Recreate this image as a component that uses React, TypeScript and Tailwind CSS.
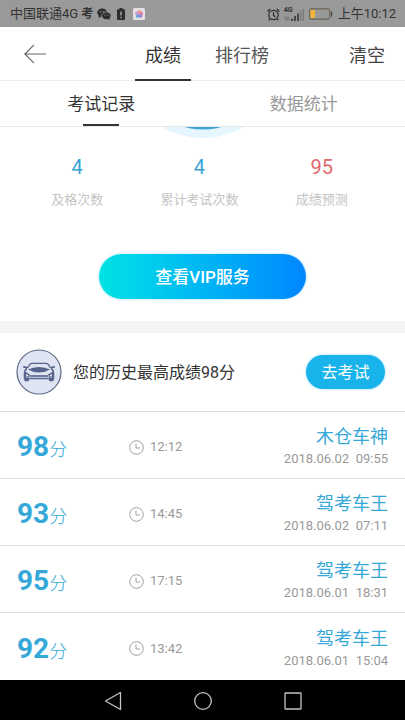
import { useState } from "react";

const STATS = [
  { label: "及格次数", value: "4", color: "text-[#35a3d3]" },
  { label: "累计考试次数", value: "4", color: "text-[#35a3d3]" },
  { label: "成绩预测", value: "95", color: "text-[#e06a6c]" },
];

const RECORDS = [
  { score: 98, duration: "12:12", title: "木仓车神", date: "2018.06.02", time: "09:55" },
  { score: 93, duration: "14:45", title: "驾考车王", date: "2018.06.02", time: "07:11" },
  { score: 95, duration: "17:15", title: "驾考车王", date: "2018.06.01", time: "18:31" },
  { score: 92, duration: "13:42", title: "驾考车王", date: "2018.06.01", time: "15:04" },
];

function StatusBar() {
  return (
    <div className="flex h-[27px] items-center bg-[#999999] pl-[10px] pr-[9px] pt-px text-[13px] text-[#333333]">
      <span>中国联通4G</span>
      <span className="ml-[3px] text-[12px] font-bold leading-none">考</span>
      {/* WeChat */}
      <svg className="ml-1 h-3 w-[14px]" viewBox="0 0 14 12">
        <ellipse cx="5.2" cy="4.6" rx="5" ry="4.1" fill="#2d2d2d" />
        <path d="M2 7.5 1.4 10 4.4 8.4Z" fill="#2d2d2d" />
        <ellipse cx="9.4" cy="7.8" rx="4.6" ry="3.8" fill="#2d2d2d" stroke="#999999" strokeWidth="0.7" />
        <path d="M10.5 10.8 12.8 12 12.4 10Z" fill="#2d2d2d" />
        <circle cx="3.6" cy="3.7" r="0.7" fill="#999999" />
        <circle cx="6.8" cy="3.7" r="0.7" fill="#999999" />
        <circle cx="7.9" cy="7.1" r="0.6" fill="#999999" />
        <circle cx="10.9" cy="7.1" r="0.6" fill="#999999" />
      </svg>
      {/* Low battery */}
      <svg className="ml-[6px] h-3 w-2" viewBox="0 0 8 12">
        <path d="M2.5 0h3v1.3H7a1 1 0 0 1 1 1V11a1 1 0 0 1-1 1H1a1 1 0 0 1-1-1V2.3a1 1 0 0 1 1-1h1.5Z" fill="#2d2d2d" />
        <path d="M4 3.5v4M4 8.7v1.5" stroke="#bbbbbb" strokeWidth="1.3" />
      </svg>
      {/* Gallery app */}
      <svg className="ml-2 h-3 w-3" viewBox="0 0 12 12">
        <rect width="12" height="12" rx="1.5" fill="#e4e0e4" />
        <circle cx="6.4" cy="3.9" r="1.9" fill="#ee9d78" />
        <circle cx="8.2" cy="5.4" r="1.9" fill="#e688a8" />
        <circle cx="7.5" cy="7.8" r="1.9" fill="#a77fd0" />
        <circle cx="4.8" cy="7.9" r="1.9" fill="#58a4dd" />
        <circle cx="4" cy="5.3" r="1.9" fill="#c997cc" />
        <circle cx="6" cy="6" r="1.2" fill="#c78fd6" />
      </svg>

      {/* Alarm */}
      <svg className="ml-auto h-[13px] w-[13px]" viewBox="0 0 13 13" fill="none" stroke="#2d2d2d" strokeWidth="1.3">
        <circle cx="6.5" cy="7" r="4.7" />
        <path d="M6.5 4.2V7.2L8.3 9M.6 3.4 3.2 1M12.4 3.4 9.8 1M3 10.6 1.7 12.3M10 10.6l1.3 1.7" />
      </svg>
      {/* Signal */}
      <span className="ml-1 flex h-[14px] w-5 items-end">
        <span className="flex h-full w-[7px] flex-col justify-between text-[7px] font-bold leading-[7px]">
          4G
          <svg className="h-[5px] w-[6px]" viewBox="0 0 6 5">
            <path d="M0 1.5h5M1 3.5h5" stroke="#7c7c7c" strokeWidth="1.4" />
          </svg>
        </span>
        <svg className="h-[13px] w-[13px]" viewBox="0 0 13 13">
          <path d="M1 10.5V13M4 8V13M7 5.5V13" stroke="#333333" strokeWidth="1.6" />
          <path d="M9.8 3V13M12.3 1V13" stroke="#777777" strokeWidth="1.3" />
        </svg>
      </span>
      {/* Battery */}
      <svg className="ml-[5px] h-3 w-6" viewBox="0 0 24 12">
        <rect x="0.6" y="0.9" width="20" height="10.2" rx="1.5" fill="none" stroke="#6d6254" strokeWidth="1.1" />
        <rect x="1.5" y="2" width="4.5" height="8" fill="#f3b535" />
        <path d="M22.5 3.5v5" stroke="#444444" strokeWidth="1.4" />
      </svg>
      <span className="ml-[5px]">上午10:12</span>
    </div>
  );
}

function CarBadge() {
  return (
    <svg className="h-[46px] w-[46px] shrink-0" viewBox="0 0 46 46">
      <circle cx="23" cy="23" r="22" fill="#dfe4f2" stroke="#5d6885" strokeWidth="1.2" />
      {/* Roof and mirrors */}
      <path d="M11.5 19 14 15.2Q14.7 14.3 16 14.3H30Q31.300 14.3 32 15.2L34.5 19" fill="none" stroke="#56638a" strokeWidth="1.3" />
      <path d="M7 17 11.500 17.800 11 19.600 7.500 19ZM39 17 34.500 17.800 35 19.600 38.500 19Z" fill="#56638a" />
      {/* Bonnet */}
      <path d="M12 20.500Q17 18 23 18T34 20.500Q29 23.600 23 23.600T12 20.500Z" fill="#56638a" />
      {/* Body sides and bumper */}
      <path d="M11 19.500Q8.500 21 8.500 24V29.500H37.500V24Q37.500 21 35 19.500" fill="none" stroke="#56638a" strokeWidth="1.5" />
      <path d="M9 22.500 14 25.500 12.500 28H9ZM37 22.500 32 25.500 33.500 28H37Z" fill="#56638a" />
      <path d="M10.200 25 12.500 26.300 11.500 27.600H10.200ZM35.800 25 33.500 26.300 34.500 27.600H35.800Z" fill="#eef1f9" />
      <path d="M13.500 27H32.500" stroke="#56638a" strokeWidth="1.6" />
      <path d="M8 28.500H13V31.500Q13 32.200 12.300 32.200H9.200Q8.500 32.200 8.400 31.500ZM33 28.500H38L37.600 31.500Q37.500 32.200 36.800 32.200H33.700Q33 32.200 33 31.500Z" fill="#56638a" />
    </svg>
  );
}

function ClockIcon() {
  return (
    <svg className="h-[15px] w-[15px]" viewBox="0 0 15 15" fill="none" stroke="#a0a0a0">
      <circle cx="7.5" cy="7.5" r="6.8" />
      <path d="M7 3.5V8H11" />
    </svg>
  );
}

export default function App() {
  const [page, setPage] = useState("成绩");
  const [tab, setTab] = useState("考试记录");

  return (
    <div className="flex min-h-screen flex-col bg-white font-['Roboto','Noto_Sans_CJK_SC',sans-serif] text-[#333333]">
      <StatusBar />

      {/* Title bar */}
      <header className="grid h-[54px] grid-cols-[1fr_auto_1fr] items-center border-b border-[#eeeeee] pl-6 pr-5 text-[18px]">
        <button aria-label="返回" className="justify-self-start">
          <svg className="h-5 w-[22px]" viewBox="0 0 22 20" fill="none" stroke="#666666" strokeWidth="1.2">
            <path d="M22 10H.8M10 .8.8 10 10 19.2" />
          </svg>
        </button>
        <nav className="flex h-[54px] gap-[14px] pl-[5px]">
          {["成绩", "排行榜"].map((name) => (
            <button
              key={name}
              onClick={() => setPage(name)}
              className={`border-b-2 px-[10px] pt-1 ${
                page === name ? "border-[#333333]" : "border-transparent text-[#555555]"
              }`}
            >
              {name}
            </button>
          ))}
        </nav>
        <button className="justify-self-end pt-[2px] text-[#444444]">清空</button>
      </header>

      {/* Tabs */}
      <div className="grid h-[46px] grid-cols-2 border-b border-[#e8e8e8] text-[17px]">
        {["考试记录", "数据统计"].map((name) => (
          <button
            key={name}
            onClick={() => setTab(name)}
            className={`flex flex-col items-center ${tab === name ? "" : "text-[#999999]"}`}
          >
            <span className="flex flex-1 items-center pt-1">{name}</span>
            <span className={`h-[2px] w-9 ${tab === name ? "bg-[#333333]" : ""}`} />
          </button>
        ))}
      </div>

      {/* Summary */}
      <section className="flex flex-col items-center pb-[22px]">
        <svg className="h-[11px] w-[84px]" viewBox="0 0 84 11">
          <circle cx="42" cy="-71" r="82" fill="#e5f6fe" />
          <circle cx="42" cy="-68" r="70.5" fill="#3aa5d5" />
        </svg>
        <dl className="mt-4 grid w-full grid-cols-3 pl-4 pr-[22px] text-center">
          {STATS.map((stat) => (
            <div key={stat.label} className="flex flex-col-reverse gap-[10px]">
              <dt className="text-[13px] leading-5 text-[#c4c4c4]">{stat.label}</dt>
              <dd className={`text-[20px] leading-[26px] ${stat.color}`}>{stat.value}</dd>
            </div>
          ))}
        </dl>
        <button className="mt-11 h-[45px] w-[207px] rounded-full bg-linear-to-r from-[#00e2e4] to-[#0086ff] pt-[2px] text-[17px] font-medium text-white shadow-[0_0_3px_#9edcff]">
          查看VIP服务
        </button>
      </section>

      <div className="h-3 bg-[#f4f4f4]" />

      {/* Best score */}
      <section className="flex h-[79px] items-center border-b border-[#d9dee1] pl-4 pr-5">
        <CarBadge />
        <p className="ml-[11px] pt-[2px] text-[16px]">您的历史最高成绩98分</p>
        <button className="ml-auto h-[34px] w-[79px] rounded-full bg-[#19b3ec] pt-[2px] text-[16px] text-white shadow-[0_0_3px_#9edcff]">
          去考试
        </button>
      </section>

      {/* Exam history */}
      <ul className="flex-1 divide-y divide-[#dde1e3]">
        {RECORDS.map((record) => (
          <li key={record.date + record.time} className="flex h-[67px] items-center px-[17px] pt-1">
            <p className="w-28 text-[#35a8d8]">
              <span className="text-[28px] font-bold">{record.score}</span>
              <span className="text-[18px] font-light">分</span>
            </p>
            <p className="flex items-center gap-[6px] text-[13px] text-[#999999]">
              <ClockIcon />
              {record.duration}
            </p>
            <div className="ml-auto text-right">
              <p className="text-[18px] leading-6 text-[#35a8d8]">{record.title}</p>
              <p className="whitespace-pre text-[13px] leading-5 text-[#999999]">
                {record.date}  {record.time}
              </p>
            </div>
          </li>
        ))}
      </ul>

      {/* System navigation */}
      <div className="flex h-[41px] items-center justify-center gap-[72px] bg-black">
        <button aria-label="后退">
          <svg className="h-5 w-[18px]" viewBox="0 0 18 20" fill="none" stroke="#c4c4c4" strokeWidth="1.3" strokeLinejoin="round">
            <path d="M16.5 1.5V18.5L1.5 10Z" />
          </svg>
        </button>
        <button aria-label="主页">
          <svg className="h-5 w-[18px]" viewBox="0 0 18 20" fill="none" stroke="#c4c4c4" strokeWidth="1.3">
            <circle cx="9" cy="10" r="8.3" />
          </svg>
        </button>
        <button aria-label="最近任务">
          <svg className="h-5 w-[18px]" viewBox="0 0 18 20" fill="none" stroke="#c4c4c4" strokeWidth="1.3">
            <rect x="1" y="2" width="16" height="16" rx="0.5" />
          </svg>
        </button>
      </div>
    </div>
  );
}
